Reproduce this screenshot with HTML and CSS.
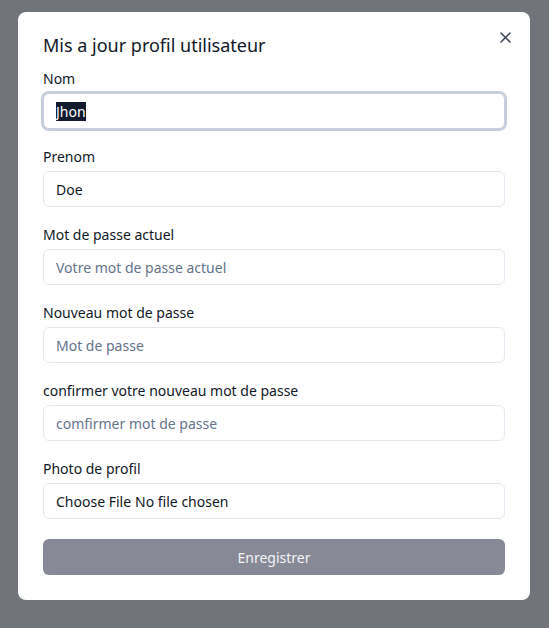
FILE: index.html
```html
<!DOCTYPE html>
<html lang="fr">
<head>
    <meta charset="UTF-8">
    <meta name="viewport" content="width=device-width, initial-scale=1.0">
    <title>Profil utilisateur</title>
    <link rel="stylesheet" href="styles.css">
</head>
<body>
    <section class="modal">
        <button type="button" class="close_btn" aria-label="Fermer">
            <svg width="11" height="11" viewBox="0 0 11 11"><path d="M1 1L10 10M10 1L1 10" stroke="#374151" stroke-width="1.5" stroke-linecap="round"/></svg>
        </button>
        <h1>Mis a jour profil utilisateur</h1>
        <form id="profileForm" class="profile_form">
            <div class="field">
                <label for="nom">Nom</label>
                <input type="text" id="nom" name="nom" value="Jhon" class="focused">
            </div>
            <div class="field">
                <label for="prenom">Prenom</label>
                <input type="text" id="prenom" name="prenom" value="Doe">
            </div>
            <div class="field">
                <label for="current_password">Mot de passe actuel</label>
                <input type="password" id="current_password" name="current_password" placeholder="Votre mot de passe actuel">
            </div>
            <div class="field">
                <label for="new_password">Nouveau mot de passe</label>
                <input type="password" id="new_password" name="new_password" placeholder="Mot de passe">
            </div>
            <div class="field">
                <label for="confirm_password">confirmer votre nouveau mot de passe</label>
                <input type="password" id="confirm_password" name="confirm_password" placeholder="comfirmer mot de passe">
            </div>
            <div class="field">
                <label for="photo">Photo de profil</label>
                <input type="file" id="photo" name="photo" accept="image/*">
            </div>
            <button type="submit" class="save_btn">Enregistrer</button>
        </form>
    </section>
    <script src="script.js"></script>
</body>
</html>
```

FILE: styles.css
```css
* {
    box-sizing: border-box;
}

body {
    margin: 0;
    min-height: 100vh;
    background: #71747a;
    font-family: "Noto Sans", sans-serif;
    color: #111827;
    padding: 12px 19px 0 18px;
}

.modal {
    position: relative;
    background: #ffffff;
    border-radius: 8px;
    width: 512px;
    padding: 20px 25px 25px;
}

.close_btn {
    position: absolute;
    top: 20px;
    right: 19px;
    border: none;
    background: none;
    padding: 0;
    width: 11px;
    height: 11px;
    cursor: pointer;
}

.close_btn svg {
    display: block;
}

h1 {
    margin: 0 0 11px;
    font-size: 18px;
    font-weight: 400;
    line-height: 26px;
    color: #111827;
}

.field {
    margin-bottom: 18px;
}

label {
    display: block;
    font-size: 14px;
    line-height: 20px;
    margin-bottom: 4px;
    color: #111827;
}

input {
    display: block;
    width: 100%;
    height: 36px;
    padding: 0 12px;
    border: 1px solid #e2e8f0;
    border-radius: 6px;
    font-family: inherit;
    font-size: 14px;
    color: #111827;
    background: #ffffff;
    outline: none;
}

input::placeholder {
    color: #64748b;
}

input.focused {
    border-color: #c7cfdc;
    box-shadow: 0 0 0 2px #c7cfdc;
}

input.focused::selection {
    background: #111a2e;
    color: #ffffff;
}

input[type="file"] {
    padding: 8px 12px;
    line-height: 18px;
}

input[type="file"]::file-selector-button {
    border: none;
    background: none;
    padding: 0;
    margin-right: 4px;
    font-family: inherit;
    font-size: 14px;
    color: #111827;
}

.save_btn {
    display: block;
    width: 100%;
    height: 36px;
    border: none;
    border-radius: 6px;
    background: #878996;
    color: #f3f4f6;
    font-family: inherit;
    font-size: 14px;
    margin-top: 20px;
}
```

FILE: script.js
```js
// champ Nom actif et texte sélectionné au chargement
const nomInput = document.getElementById("nom");
nomInput.focus();
nomInput.select();
```
